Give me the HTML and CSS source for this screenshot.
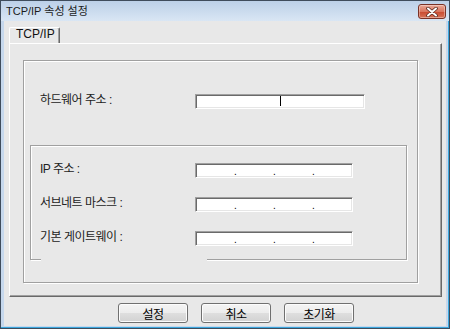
FILE: index.html
```html
<!DOCTYPE html>
<html>
<head>
  <meta charset="UTF-8">
  <title>TCP/IP 속성 설정</title>
  <link rel="stylesheet" href="styles.css">
</head>
<body>
  <div class="window">
    <div class="titlebar">
      <span class="title">TCP/IP 속성 설정</span>
      <button type="button" class="close-btn" aria-label="닫기">
        <svg width="14" height="10" viewBox="0 0 14 10">
          <path d="M3 1.5 L11 8.5 M11 1.5 L3 8.5" stroke="#5a2a20" stroke-width="3.6" stroke-linecap="round"/>
          <path d="M3 1.5 L11 8.5 M11 1.5 L3 8.5" stroke="#fff" stroke-width="2" stroke-linecap="round"/>
        </svg>
      </button>
    </div>

    <div class="client">
      <div class="tabs">
        <div class="tab active">TCP/IP</div>
      </div>

      <div class="panel">
        <div class="group outer-group">
          <div class="field-row hw-row">
            <label>하드웨어 주소 :</label>
            <div class="textbox mac"><span class="caret"></span></div>
          </div>

          <div class="group ip-group">
            <div class="field-row">
              <label>IP 주소 :</label>
              <div class="textbox ip">
                <span class="octet"></span><span class="dot">.</span>
                <span class="octet"></span><span class="dot">.</span>
                <span class="octet"></span><span class="dot">.</span>
                <span class="octet"></span>
              </div>
            </div>
            <div class="field-row">
              <label>서브네트 마스크 :</label>
              <div class="textbox ip">
                <span class="octet"></span><span class="dot">.</span>
                <span class="octet"></span><span class="dot">.</span>
                <span class="octet"></span><span class="dot">.</span>
                <span class="octet"></span>
              </div>
            </div>
            <div class="field-row">
              <label>기본 게이트웨이 :</label>
              <div class="textbox ip">
                <span class="octet"></span><span class="dot">.</span>
                <span class="octet"></span><span class="dot">.</span>
                <span class="octet"></span><span class="dot">.</span>
                <span class="octet"></span>
              </div>
            </div>
          </div>
        </div>
      </div>

      <div class="buttons">
        <button type="button" class="btn">설정</button>
        <button type="button" class="btn">취소</button>
        <button type="button" class="btn">초기화</button>
      </div>
    </div>
  </div>
</body>
</html>
```

FILE: styles.css
```css
/* dialog window */
body {
  margin: 0;
  font-family: "Liberation Sans", "Noto Sans CJK KR", sans-serif;
  font-size: 11px;
  color: #000;
}
.window {
  width: 450px;
  height: 329px;
  box-sizing: border-box;
  border: 1px solid #3f4c5c;
  background: #c6d8ed;
  box-shadow: inset -1px -1px 0 #3aa6dc;
  display: flex;
  flex-direction: column;
}
.titlebar {
  height: 20px;
  flex: none;
  display: flex;
  align-items: flex-start;
  justify-content: space-between;
  padding: 0 3px 0 5px;
  background: linear-gradient(#bcd0e8, #d9e6f4);
}
.title {
  line-height: 20px;
  font-size: 11px;
  color: #1b1b1b;
}
.close-btn {
  width: 28px;
  height: 15px;
  margin-top: 3px;
  padding: 0;
  border: 1px solid #7a3226;
  border-radius: 3px;
  background: linear-gradient(#eaa898, #d9765f 50%, #c8492f 51%, #d77257);
  box-shadow: inset 0 0 0 1px rgba(255,255,255,0.35);
  display: flex;
  align-items: center;
  justify-content: center;
}

/* client area */
.client {
  flex: 1;
  margin: 0 3px 2px 3px;
  padding: 6px 4px 0 5px;
  background: #e8e8e8;
  display: flex;
  flex-direction: column;
}
.tabs {
  display: flex;
  height: 16px;
}
.tab {
  width: 51px;
  height: 16px;
  box-sizing: border-box;
  padding: 0 0 0 6px;
  border-top: 1px solid #fff;
  border-left: 1px solid #fff;
  border-right: 1px solid #696969;
  border-radius: 2px 2px 0 0;
  box-shadow: inset -1px 0 0 #a0a0a0;
  font-size: 12px;
  line-height: 12px;
  color: #111;
}
.panel {
  width: 433px;
  height: 254px;
  box-sizing: border-box;
  padding: 16px 0 0 13px;
  border-top: 1px solid #fff;
  border-left: 1px solid #fff;
  border-right: 1px solid #696969;
  border-bottom: 1px solid #696969;
  box-shadow: inset -1px -1px 0 #a0a0a0;
}

/* etched group boxes */
.group {
  box-sizing: border-box;
  border: 1px solid #a0a0a0;
  box-shadow: inset 1px 1px 0 #fff, 1px 1px 0 #fff;
}
.outer-group {
  width: 395px;
  height: 223px;
  padding: 33px 0 0 6px;
}
.hw-row {
  margin-left: 10px;
}
.ip-group {
  position: relative;
  width: 377px;
  height: 115px;
  margin-top: 36px;
  padding: 17px 0 0 9px;
  display: flex;
  flex-direction: column;
  gap: 19px;
}
.ip-group::after {
  content: "";
  position: absolute;
  left: 10px;
  bottom: -2px;
  width: 166px;
  height: 2px;
  background: #e8e8e8;
}

.field-row {
  display: flex;
  align-items: flex-start;
}
.field-row label {
  width: 155px;
  font-size: 12px;
  letter-spacing: -0.5px;
  line-height: 12px;
  color: #222;
}
.textbox {
  height: 15px;
  box-sizing: border-box;
  background: #fff;
  border: 1px solid;
  border-color: #a0a0a0 #fff #fff #a0a0a0;
  box-shadow: inset 1px 1px 0 #6a6a6a, inset -1px -1px 0 #e6e6e6;
}
.mac {
  width: 170px;
}
.caret {
  display: block;
  width: 1px;
  height: 10px;
  margin: 1px 0 0 84px;
  background: #000;
}
.ip {
  width: 158px;
  display: flex;
  align-items: flex-end;
  padding: 0 1px;
}
.octet {
  flex: 1;
}
.dot {
  width: 2px;
  font-size: 10px;
  line-height: 10px;
  text-align: center;
  color: #000;
}

/* bottom buttons */
.buttons {
  display: flex;
  gap: 13px;
  margin-top: 6px;
  padding-left: 109px;
}
.btn {
  width: 70px;
  height: 20px;
  padding: 0;
  border: 1px solid #707070;
  border-radius: 3px;
  background: linear-gradient(#f4f4f4, #ececec 50%, #dedede 51%, #d2d2d2);
  box-shadow: inset 0 0 0 1px #fcfcfc;
  font-family: "Liberation Sans", "Noto Sans CJK KR", sans-serif;
  font-size: 12px;
  letter-spacing: -0.5px;
  color: #000;
}
```
